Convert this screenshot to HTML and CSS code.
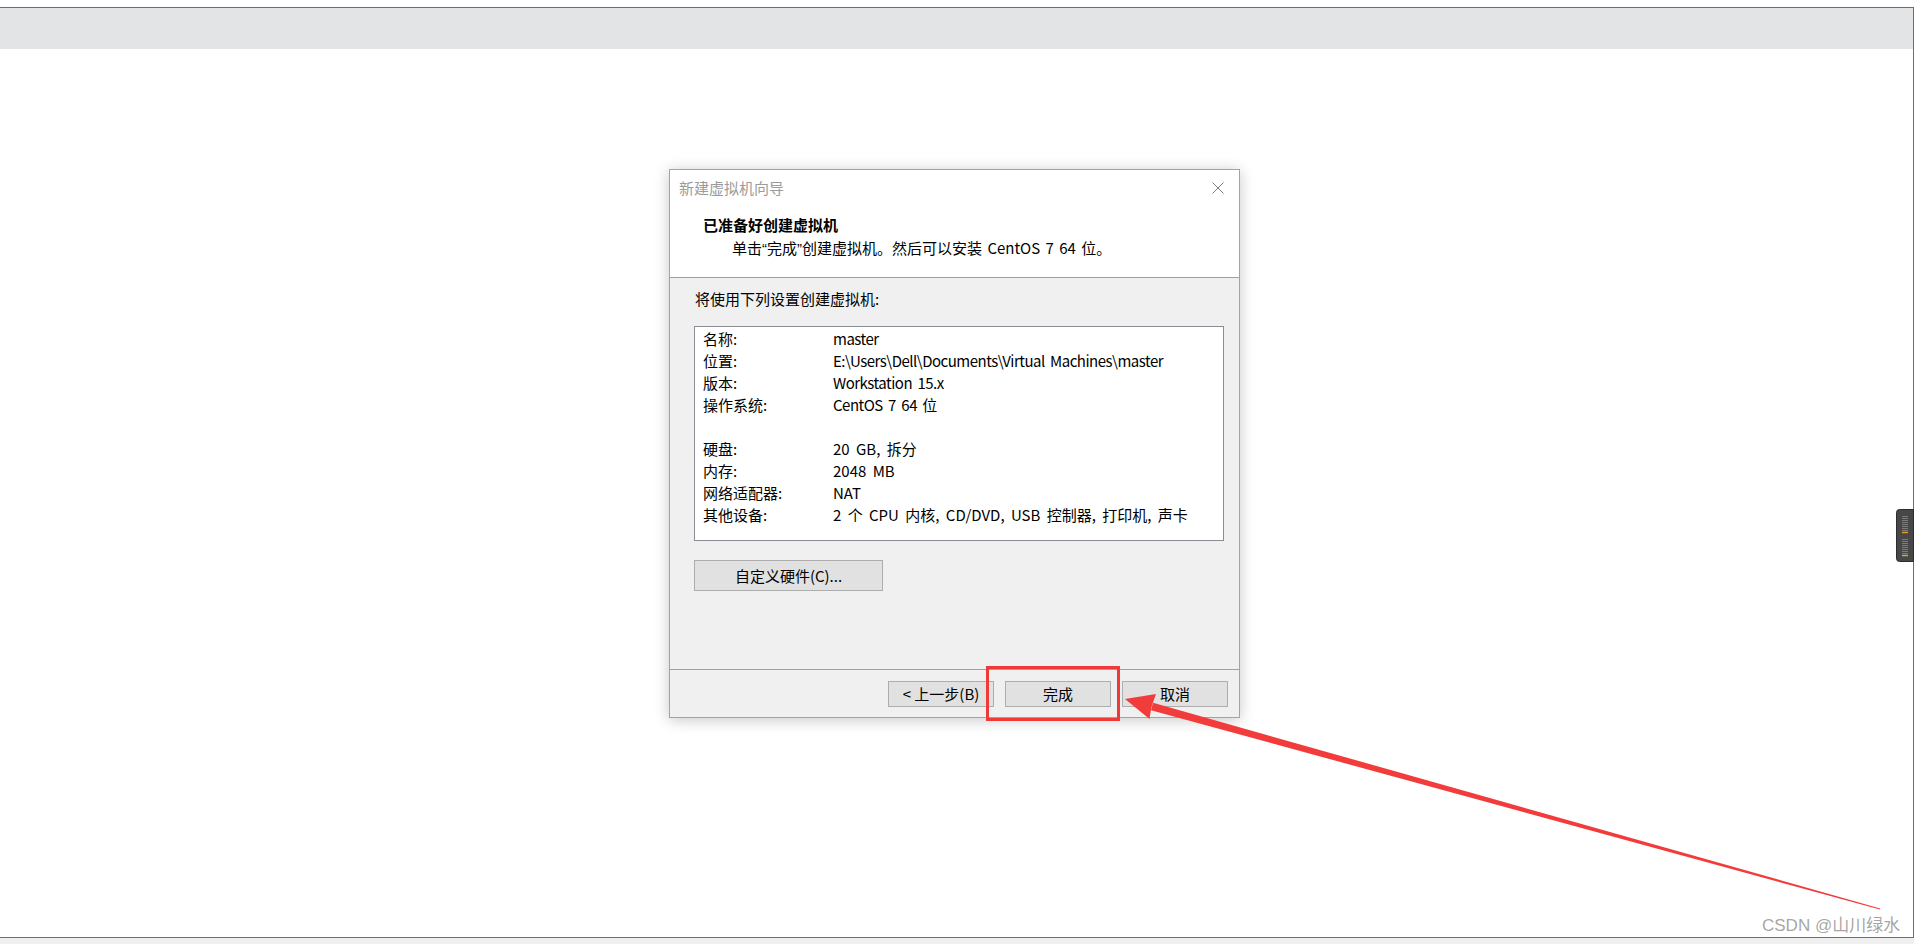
FILE: index.html
```html
<!DOCTYPE html>
<html lang="zh-CN">
<head>
<meta charset="utf-8">
<title>新建虚拟机向导</title>
<link rel="stylesheet" href="styles.css">
</head>
<body>
<div class="frame">
  <div class="topbar"></div>
  <div class="canvas">
    <div class="dialog">
      <div class="titlebar">
        <span class="title">新建虚拟机向导</span>
        <svg class="close" width="12" height="12" viewBox="0 0 12 12"><path d="M0.5 0.5 L11.5 11.5 M11.5 0.5 L0.5 11.5" stroke="#7a7a7a" stroke-width="1" fill="none"/></svg>
      </div>
      <div class="header">
        <div class="heading">已准备好创建虚拟机</div>
        <div class="subtitle">单击<span class="q">“</span>完成<span class="q">”</span>创建虚拟机。然后可以安装 CentOS 7 64 位。</div>
      </div>
      <div class="body">
        <div class="intro">将使用下列设置创建虚拟机:</div>
        <div class="summary">
          <div class="row"><span>名称:</span><span class="latin">master</span></div>
          <div class="row"><span>位置:</span><span class="latin">E:\Users\Dell\Documents\Virtual Machines\master</span></div>
          <div class="row"><span>版本:</span><span class="latin">Workstation 15.x</span></div>
          <div class="row"><span>操作系统:</span><span class="latin">CentOS 7 64 位</span></div>
          <div class="row"><span>&nbsp;</span><span></span></div>
          <div class="row"><span>硬盘:</span><span class="wide">20 GB, 拆分</span></div>
          <div class="row"><span>内存:</span><span class="wide">2048 MB</span></div>
          <div class="row"><span>网络适配器:</span><span>NAT</span></div>
          <div class="row"><span>其他设备:</span><span class="wide">2 个 CPU 内核, CD/DVD, USB 控制器, 打印机, 声卡</span></div>
        </div>
        <button class="btn custom">自定义硬件(C)...</button>
      </div>
      <div class="footer">
        <button class="btn">&lt; 上一步(B)</button>
        <button class="btn">完成</button>
        <button class="btn">取消</button>
      </div>
    </div>
  </div>
</div>
<div class="strip"></div>

<div class="highlight"></div>

<svg class="arrow" width="1914" height="944" viewBox="0 0 1914 944">
  <polygon points="1151.0,710.2 1879.9,909.6 1880.1,908.4 1153.0,702.8" fill="#f23b3b"/>
  <polygon points="1125,699 1149.5,719 1151.5,706.5 1156,694" fill="#f23b3b"/>
</svg>

<svg class="meter" width="18" height="53" viewBox="0 0 18 53">
  <path d="M17.5 0.5 H3.5 Q0.5 0.5 0.5 3.5 V49.5 Q0.5 52.5 3.5 52.5 H17.5 Z" fill="#474747" stroke="#2c2c2c"/>
  <g stroke="#7c7c7c" stroke-width="1">
    <path d="M6 7.5H12M6 9.5H12M6 11.5H12M6 13.5H12M6 15.5H12M6 17.5H12M6 19.5H12M6 21.5H12"/>
    <path d="M6 30.5H12M6 32.5H12M6 34.5H12M6 36.5H12M6 38.5H12M6 40.5H12M6 42.5H12M6 44.5H12"/>
  </g>
  <path d="M6 23.5H12" stroke="#f39c1e" stroke-width="1.4"/>
  <path d="M6 46.5H12" stroke="#92d050" stroke-width="1.4"/>
</svg>

<div class="watermark">CSDN @山川绿水</div>
</body>
</html>
```
FILE: styles.css
```css
html, body {
  margin: 0;
  padding: 0;
}
body {
  width: 1914px;
  height: 944px;
  overflow: hidden;
  background: #ffffff;
  font-family: "Noto Sans CJK SC", "Noto Sans", sans-serif;
  font-size: 15px;
  color: #000;
  position: relative;
}
.frame {
  margin-top: 7px;
  border-top: 1px solid #6e6e6e;
  border-right: 1px solid #6e6e6e;
  border-bottom: 1px solid #6e6e6e;
  box-sizing: border-box;
  height: 931px;
  display: flex;
  flex-direction: column;
}
.topbar {
  height: 41px;
  background: #e3e4e6;
  flex: none;
}
.canvas {
  flex: 1;
  background: #ffffff;
  padding-top: 120px;
  padding-left: 669px;
}
.strip {
  height: 6px;
  background: #efefef;
}
.dialog {
  width: 571px;
  box-sizing: border-box;
  border: 1px solid #a3a3a3;
  background: #ffffff;
  box-shadow: 0 2px 14px rgba(0, 0, 0, 0.22);
  display: flex;
  flex-direction: column;
}
.titlebar {
  height: 36px;
  display: flex;
  align-items: center;
  justify-content: space-between;
  padding: 0 15px 0 9px;
}
.title {
  color: #9b9b9b;
  line-height: 36px;
}
.close {
  display: block;
}
.header {
  height: 72px;
  box-sizing: border-box;
  padding: 9px 0 0 33px;
  border-bottom: 1px solid #a0a0a0;
}
.heading {
  font-weight: 700;
  line-height: 20px;
}
.subtitle {
  margin-top: 3px;
  padding-left: 29px;
  line-height: 20px;
  word-spacing: 2px;
}
.q {
  font-family: "Liberation Sans", sans-serif;
}
.latin {
  letter-spacing: -0.5px;
  word-spacing: 2.5px;
}
.wide {
  word-spacing: 3px;
}
.body {
  height: 391px;
  box-sizing: border-box;
  background: #f0f0f0;
  padding: 11px 15px 0 24px;
  display: flex;
  flex-direction: column;
  align-items: flex-start;
}
.intro {
  line-height: 20px;
  padding-left: 1px;
}
.summary {
  margin-top: 17px;
  width: 530px;
  height: 215px;
  box-sizing: border-box;
  border: 1px solid #8a8d93;
  background: #ffffff;
  padding: 1px 8px 0 8px;
}
.row {
  display: grid;
  grid-template-columns: 130px 1fr;
  line-height: 22px;
  height: 22px;
  white-space: nowrap;
}
.btn {
  font-family: "Noto Sans CJK SC", "Noto Sans", sans-serif;
  font-size: 15px;
  color: #000;
  background: #e1e1e1;
  border: 1px solid #adadad;
  width: 106px;
  height: 26px;
  padding: 0;
  margin: 0;
  line-height: 24px;
}
.custom {
  margin-top: 19px;
  width: 189px;
  height: 31px;
  line-height: 29px;
}
.footer {
  border-top: 1px solid #a0a0a0;
  background: #f0f0f0;
  height: 48px;
  box-sizing: border-box;
  padding: 11px 11px 0 0;
  display: flex;
  justify-content: flex-end;
  gap: 11px;
}
.highlight {
  position: absolute;
  left: 986px;
  top: 666px;
  width: 134px;
  height: 55px;
  box-sizing: border-box;
  border: 3px solid #ef3a3a;
}
.arrow {
  position: absolute;
  left: 0;
  top: 0;
  pointer-events: none;
}
.meter {
  position: absolute;
  left: 1896px;
  top: 509px;
}
.watermark {
  position: absolute;
  left: 1762px;
  top: 915px;
  font-family: "Liberation Sans", "Noto Sans CJK SC", sans-serif;
  font-size: 17px;
  line-height: 22px;
  color: rgba(125, 125, 125, 0.7);
  white-space: nowrap;
}
```
